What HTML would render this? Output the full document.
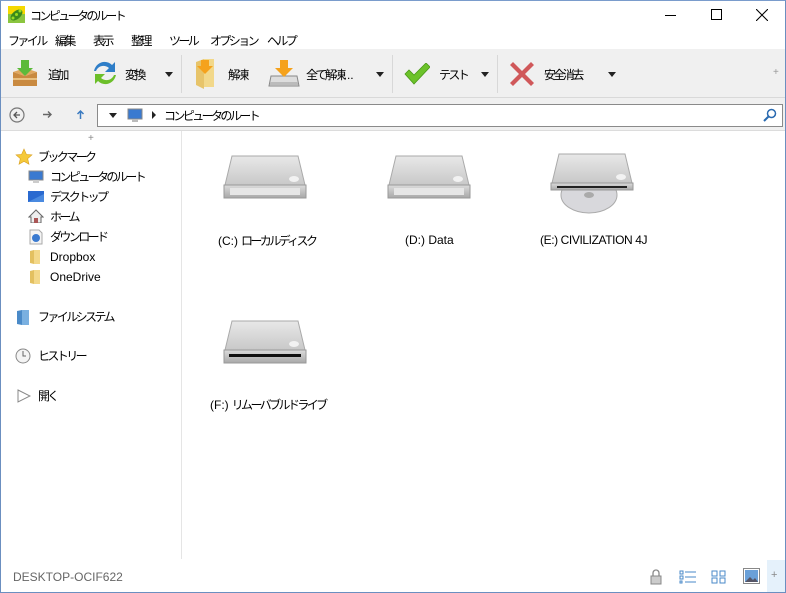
<!DOCTYPE html>
<html><head><meta charset="utf-8"><style>
*{margin:0;padding:0;box-sizing:border-box}
body{width:786px;height:593px;overflow:hidden;background:#fff;font-family:"Liberation Sans","Noto Sans CJK JP",sans-serif;font-size:12px;color:#000;position:relative}
.abs{position:absolute}
.win{position:absolute;left:0;top:0;width:786px;height:593px;border:1px solid #6b8fc0;border-top:1px solid #7a9ccc}
.tb{position:absolute;top:49px;left:1px;width:784px;height:49px;background:#f0f0f0;border-bottom:1px solid #d9d9d9}
.addr{position:absolute;top:98px;left:1px;width:784px;height:33px;background:#f0f0f0;border-bottom:1px solid #dcdcdc}
.t{position:absolute;white-space:nowrap}
.j{font-size:12px;letter-spacing:-2.6px}
.l{letter-spacing:0;margin-right:3px}
.sep{position:absolute;top:55px;width:1px;height:38px;background:#d8d8d8}
.dd{position:absolute;width:0;height:0;border-left:4px solid transparent;border-right:4px solid transparent;border-top:5px solid #222}
.side{position:absolute;left:181px;top:131px;width:1px;height:428px;background:#e5e5e5}
</style></head><body>
<div class="win"></div>
<svg class="abs" style="left:8px;top:6px" width="17" height="17"><rect width="17" height="17" fill="#8bc53f"/><rect x="0" y="0" width="17" height="8" fill="#f5d800"/><ellipse cx="8.5" cy="9" rx="7" ry="4" fill="#3a8a1a" transform="rotate(-40 8.5 9)"/><circle cx="5" cy="12" r="1.5" fill="#9d2"/><circle cx="8.5" cy="8.5" r="1.5" fill="#9d2"/><circle cx="12" cy="5" r="1.5" fill="#9d2"/></svg>
<div class="t j" style="left:30px;top:7px">コンピュータのルート</div>
<div class="abs" style="left:665px;top:15px;width:11px;height:1px;background:#000"></div>
<div class="abs" style="left:711px;top:9px;width:11px;height:11px;border:1px solid #000"></div>
<svg class="abs" style="left:756px;top:9px" width="12" height="12"><path d="M0 0L12 12M12 0L0 12" stroke="#000" stroke-width="1.1"/></svg>
<div class="t j" style="left:8px;top:32px">ファイル</div>
<div class="t j" style="left:55px;top:32px">編集</div>
<div class="t j" style="left:93px;top:32px">表示</div>
<div class="t j" style="left:131px;top:32px">整理</div>
<div class="t j" style="left:169px;top:32px">ツール</div>
<div class="t j" style="left:210px;top:32px">オプション</div>
<div class="t j" style="left:267px;top:32px">ヘルプ</div>
<div class="tb"></div>
<svg class="abs" style="left:9px;top:58px" width="32" height="32"><path d="M4 14L16 10L28 14L16 18Z" fill="#e0a860"/><path d="M4 14v14h24V14L16 18Z" fill="#c98a40"/><rect x="4" y="20" width="24" height="2" fill="#e8c080"/><path d="M12 2h8v8h4l-8 8-8-8h4z" fill="#5cba3a"/></svg>
<div class="t j" style="left:48px;top:66px">追加</div>
<svg class="abs" style="left:90px;top:57px" width="30" height="32"><path d="M4 14C6 5 16 2 22 8l3-3v10H15l4-4C14 7 8 9 6 14z" fill="#2f7ec8"/><path d="M26 18C24 27 14 30 8 24l-3 3V17h10l-4 4c5 4 11 2 13-3z" fill="#6cbf2a"/></svg>
<div class="t j" style="left:125px;top:66px">変換</div>
<div class="dd" style="left:165px;top:72px"></div>
<div class="sep" style="left:181px"></div>
<svg class="abs" style="left:194px;top:56px" width="24" height="34"><path d="M2 6l8-3v30l-8-4z" fill="#e7c46a"/><path d="M10 3h10v28H10z" fill="#f2d88a"/><path d="M7 4h8v6h4l-8 8-8-8h4z" fill="#f5a21c"/></svg>
<div class="t j" style="left:228px;top:66px">解凍</div>
<svg class="abs" style="left:268px;top:58px" width="32" height="30"><path d="M3 18h26l2 10H1z" fill="#ddd" stroke="#888"/><rect x="2" y="24" width="28" height="3" fill="#bbb"/><path d="M12 2h8v8h5l-9 9-9-9h5z" fill="#f5a21c"/></svg>
<div class="t j" style="left:306px;top:66px">全て解凍<span class="l">...</span></div>
<div class="dd" style="left:376px;top:72px"></div>
<div class="sep" style="left:392px"></div>
<svg class="abs" style="left:404px;top:63px" width="26" height="22"><path d="M1 11l4-4 5 5L22 0l4 4-16 17z" fill="#6cc22a" stroke="#4a9a18" stroke-width=".8"/></svg>
<div class="t j" style="left:439px;top:66px">テスト</div>
<div class="dd" style="left:481px;top:72px"></div>
<div class="sep" style="left:497px"></div>
<svg class="abs" style="left:510px;top:62px" width="24" height="24"><path d="M3 0L12 9L21 0L24 3L15 12L24 21L21 24L12 15L3 24L0 21L9 12L0 3Z" fill="#d0585a"/></svg>
<div class="t j" style="left:544px;top:66px">安全消去</div>
<div class="dd" style="left:608px;top:72px"></div>
<div class="t" style="left:773px;top:67px;color:#999;font-size:10px">+</div>
<div class="addr"></div>
<svg class="abs" style="left:9px;top:107px" width="16" height="16"><circle cx="8" cy="8" r="7" fill="none" stroke="#777" stroke-width="1.2"/><path d="M11 8H5M8 5L5 8l3 3" fill="none" stroke="#555" stroke-width="1.3"/></svg>
<svg class="abs" style="left:43px;top:110px" width="10" height="9"><path d="M0 4.5h8M5 1.5l3 3-3 3" fill="none" stroke="#666" stroke-width="1.4"/></svg>
<svg class="abs" style="left:76px;top:109px" width="9" height="10"><path d="M4.5 10V2M1.5 5l3-3 3 3" fill="none" stroke="#3a7ac0" stroke-width="1.5"/></svg>
<div class="abs" style="left:97px;top:104px;width:686px;height:23px;background:#fff;border:1px solid #8a8a8a"></div>
<div class="dd" style="left:109px;top:113px"></div>
<svg class="abs" style="left:127px;top:108px" width="16" height="15"><rect x="1" y="1" width="14" height="10" fill="#3a7ad0" stroke="#888"/><rect x="5" y="11" width="6" height="3" fill="#bbb"/></svg>
<div class="abs" style="left:152px;top:111px;border-top:4px solid transparent;border-bottom:4px solid transparent;border-left:4px solid #222"></div>
<div class="t j" style="left:164px;top:107px">コンピュータのルート</div>
<svg class="abs" style="left:763px;top:108px" width="14" height="14"><circle cx="8.5" cy="5.5" r="4" fill="none" stroke="#2a6ab0" stroke-width="1.5"/><path d="M6 8L1 13" stroke="#2a6ab0" stroke-width="2"/></svg>
<div class="side"></div>
<div class="t" style="left:88px;top:133px;color:#888;font-size:10px">+</div>
<svg class="abs" style="left:15px;top:148px" width="18" height="17"><path d="M9 1l2.4 5.4 5.6.5-4.3 3.8 1.3 5.6L9 13.4 4 16.3l1.3-5.6L1 6.9l5.6-.5z" fill="#f5c93a" stroke="#d9a020" stroke-width=".6"/></svg>
<div class="t j" style="left:38px;top:148px">ブックマーク</div>
<svg class="abs" style="left:28px;top:170px" width="16" height="14"><rect x="1" y="1" width="14" height="9" fill="#3a7ad0" stroke="#888"/><rect x="5" y="10" width="6" height="3" fill="#ccc"/></svg>
<div class="t j" style="left:50px;top:168px">コンピュータのルート</div>
<svg class="abs" style="left:28px;top:191px" width="16" height="12"><rect x="0" y="0" width="16" height="11" fill="#2a6ad0"/><path d="M0 11L16 3v8z" fill="#4a8ae0"/></svg>
<div class="t j" style="left:50px;top:188px">デスクトップ</div>
<svg class="abs" style="left:28px;top:209px" width="16" height="14"><path d="M8 1L1 8h2v6h10V8h2z" fill="#eee" stroke="#666"/><rect x="6" y="9" width="4" height="5" fill="#a55"/></svg>
<div class="t j" style="left:50px;top:208px">ホーム</div>
<svg class="abs" style="left:29px;top:229px" width="14" height="16"><path d="M1 1h9l3 3v11H1z" fill="#f4f4f4" stroke="#aaa"/><circle cx="7" cy="9" r="4" fill="#3a7ad0"/></svg>
<div class="t j" style="left:50px;top:228px">ダウンロード</div>
<svg class="abs" style="left:29px;top:249px" width="12" height="16"><path d="M1 2l4-1v14l-4-1z" fill="#e3c060"/><rect x="5" y="1" width="6" height="14" fill="#f3d88a"/></svg>
<div class="t" style="left:50px;top:250px">Dropbox</div>
<svg class="abs" style="left:29px;top:269px" width="12" height="16"><path d="M1 2l4-1v14l-4-1z" fill="#e3c060"/><rect x="5" y="1" width="6" height="14" fill="#f3d88a"/></svg>
<div class="t" style="left:50px;top:270px">OneDrive</div>
<svg class="abs" style="left:16px;top:309px" width="14" height="17"><path d="M1 2l5-1v15l-5-1z" fill="#4a8ac8"/><rect x="6" y="1" width="7" height="15" fill="#7ab0e0"/></svg>
<div class="t j" style="left:38px;top:308px">ファイルシステム</div>
<svg class="abs" style="left:15px;top:348px" width="16" height="16"><circle cx="8" cy="8" r="7" fill="#f4f4f4" stroke="#888"/><path d="M8 3v5h3" fill="none" stroke="#666"/></svg>
<div class="t j" style="left:38px;top:347px">ヒストリー</div>
<svg class="abs" style="left:17px;top:389px" width="14" height="14"><path d="M1 1l12 6-12 6z" fill="none" stroke="#888"/></svg>
<div class="t j" style="left:38px;top:387px">開く</div>
<svg width="0" height="0" style="position:absolute"><defs>
<linearGradient id="tg" x1="0" y1="0" x2="0" y2="1"><stop offset="0" stop-color="#e8e8e8"/><stop offset="1" stop-color="#c8c8c8"/></linearGradient>
<linearGradient id="fg" x1="0" y1="0" x2="0" y2="1"><stop offset="0" stop-color="#dcdcdc"/><stop offset="1" stop-color="#a8a8a8"/></linearGradient>
</defs></svg>
<svg class="abs" style="left:222px;top:155px" width="86" height="46"><path d="M10 1h66l7 29H3z" fill="url(#tg)" stroke="#aaa"/><rect x="2" y="30" width="82" height="13" fill="url(#fg)" stroke="#999"/><rect x="8" y="33" width="70" height="7" fill="#e6e6e6"/><ellipse cx="72" cy="24" rx="5" ry="3" fill="#f2f2f2"/></svg>
<div class="t j" style="left:218px;top:232px"><span class="l">(C:)</span>ローカルディスク</div>
<svg class="abs" style="left:386px;top:155px" width="86" height="46"><path d="M10 1h66l7 29H3z" fill="url(#tg)" stroke="#aaa"/><rect x="2" y="30" width="82" height="13" fill="url(#fg)" stroke="#999"/><rect x="8" y="33" width="70" height="7" fill="#e6e6e6"/><ellipse cx="72" cy="24" rx="5" ry="3" fill="#f2f2f2"/></svg>
<div class="t" style="left:405px;top:233px">(D:) Data</div>
<svg class="abs" style="left:549px;top:153px" width="86" height="62"><ellipse cx="40" cy="42" rx="28" ry="18" fill="#d8d8dc" stroke="#aaa"/><ellipse cx="40" cy="42" rx="5" ry="3" fill="#aaa"/><path d="M10 1h66l7 29H3z" fill="url(#tg)" stroke="#aaa"/><rect x="2" y="30" width="82" height="7" fill="url(#fg)" stroke="#999"/><rect x="8" y="33" width="70" height="2" fill="#222"/><ellipse cx="72" cy="24" rx="5" ry="3" fill="#f2f2f2"/></svg>
<div class="t" style="left:540px;top:233px;letter-spacing:-0.4px">(E:) CIVILIZATION 4J</div>
<svg class="abs" style="left:222px;top:320px" width="86" height="46"><path d="M10 1h66l7 29H3z" fill="url(#tg)" stroke="#aaa"/><rect x="2" y="30" width="82" height="13" fill="url(#fg)" stroke="#999"/><rect x="7" y="34" width="72" height="3" fill="#111"/><ellipse cx="72" cy="24" rx="5" ry="3" fill="#f2f2f2"/></svg>
<div class="t j" style="left:210px;top:396px"><span class="l">(F:)</span>リムーバブルドライブ</div>
<div class="t" style="left:13px;top:570px;color:#666">DESKTOP-OCIF622</div>
<svg class="abs" style="left:649px;top:569px" width="14" height="16"><path d="M4 7V4a3 3 0 016 0v3" fill="none" stroke="#888" stroke-width="1.3"/><rect x="2" y="7" width="10" height="8" fill="#ccc" stroke="#888"/></svg>
<svg class="abs" style="left:679px;top:570px" width="18" height="14"><g fill="none" stroke="#4a8ac8"><rect x="1" y="1" width="3" height="3"/><rect x="1" y="6" width="3" height="3"/><rect x="1" y="11" width="2" height="2"/><path d="M6 2h11M6 7h11M6 12h11"/></g></svg>
<svg class="abs" style="left:711px;top:570px" width="16" height="14"><g fill="none" stroke="#4a8ac8"><rect x="1" y="1" width="5" height="5"/><rect x="9" y="1" width="5" height="5"/><rect x="1" y="8" width="5" height="5"/><rect x="9" y="8" width="5" height="5"/></g></svg>
<svg class="abs" style="left:743px;top:568px" width="17" height="16"><rect x="0.5" y="0.5" width="16" height="15" fill="#fff" stroke="#888"/><rect x="2" y="2" width="13" height="12" fill="#6aa0d8"/><path d="M2 14l5-5 3 3 2-2 3 4z" fill="#556"/></svg>
<div class="abs" style="left:767px;top:560px;width:18px;height:32px;background:#e5f1fb"></div>
<div class="t" style="left:771px;top:569px;color:#888;font-size:11px">+</div>
</body></html>
